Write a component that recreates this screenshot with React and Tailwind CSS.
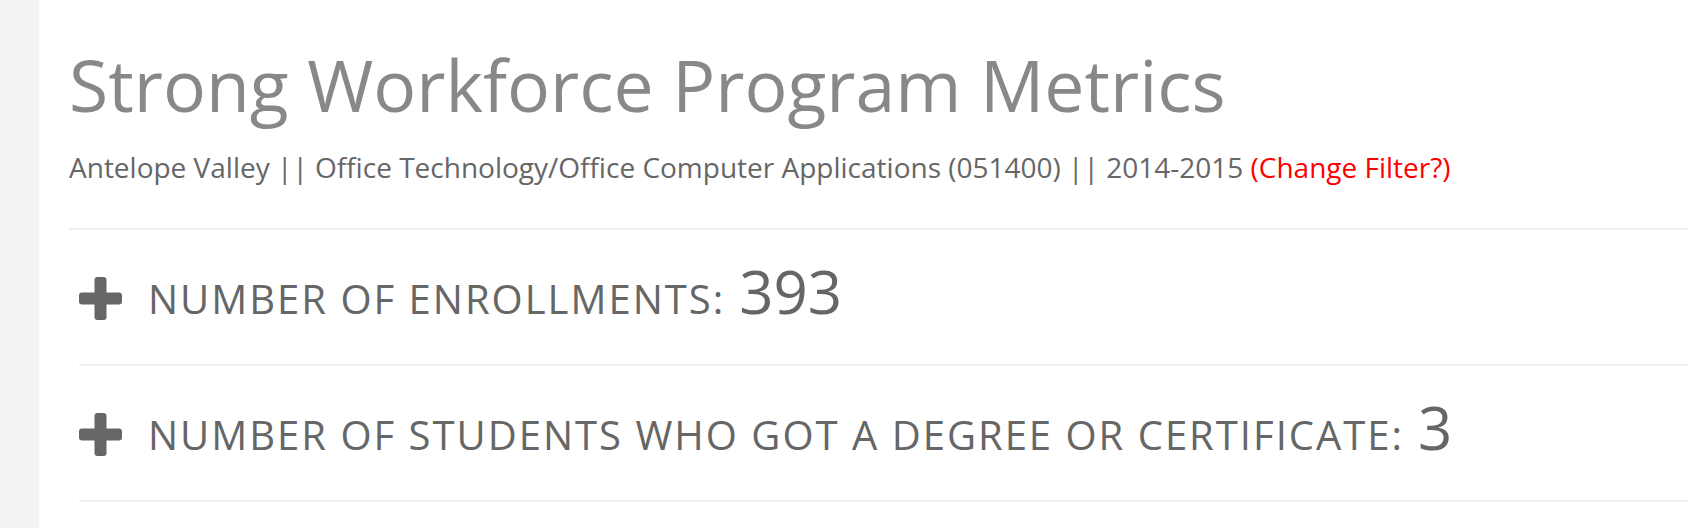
import React from "react";

function PlusIcon() {
  return (
    <svg width="43" height="43" viewBox="0 0 43 43" className="shrink-0 mt-[16px]">
      <rect x="15.5" y="0" width="12" height="43" rx="3" fill="#666666" />
      <rect x="0" y="15.5" width="43" height="12" rx="3" fill="#666666" />
    </svg>
  );
}

function MetricRow({ label, value }) {
  return (
    <div className="ml-[10px] border-b-2 border-[#eeeeee] pt-[31px] pb-[43px] flex items-start">
      <PlusIcon />
      <div className="ml-[26px] flex items-baseline text-[#666666]">
        <span className="text-[40px] leading-none tracking-[2px] uppercase">{label}</span>
        <span className="text-[60px] leading-none ml-[14px]">{value}</span>
      </div>
    </div>
  );
}

export default function App() {
  return (
    <div
      className="flex w-[1688px] h-[528px] bg-white overflow-hidden"
      style={{ fontFamily: '"Open Sans", "Liberation Sans", sans-serif' }}
    >
      <div className="w-[39px] shrink-0 bg-[#f3f3f3]" />
      <div className="flex-1 pl-[30px]">
        <h1 className="pt-[49px] text-[71.5px] leading-[72px] text-[#888888] font-normal whitespace-nowrap">
          Strong Workforce Program Metrics
        </h1>
        <p className="mt-[26px] text-[28px] leading-[40px] text-[#666666] whitespace-nowrap">
          Antelope Valley || Office Technology/Office Computer Applications (051400) || 2014-2015{" "}
          <span className="text-[#ff0000]">(Change Filter?)</span>
        </p>
        <div className="mt-[41px] border-t-2 border-[#eeeeee]" />
        <MetricRow label="Number of Enrollments:" value="393" />
        <MetricRow label="Number of Students Who Got a Degree or Certificate:" value="3" />
      </div>
    </div>
  );
}
